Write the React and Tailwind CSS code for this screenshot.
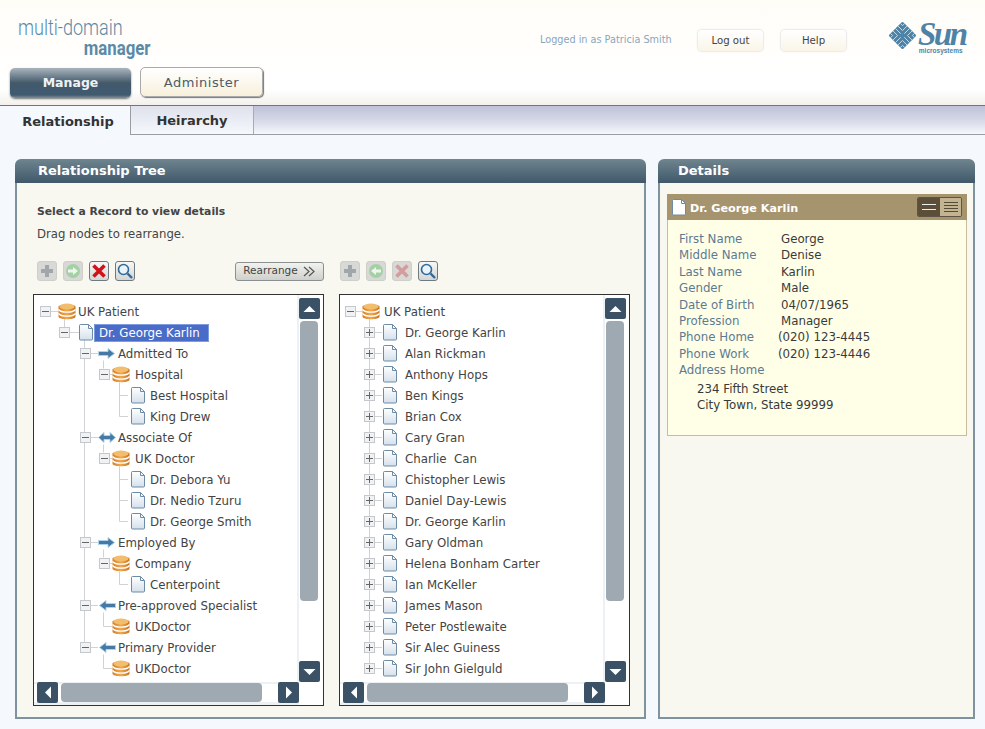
const leftRows = [
  { level: 0, type: "db", label: "UK Patient", open: true },
  { level: 1, type: "doc", label: "Dr. George Karlin", open: true, selected: true },
  { level: 2, type: "right", label: "Admitted To", open: true },
  { level: 3, type: "db", label: "Hospital", open: true },
  { level: 4, type: "doc", label: "Best Hospital" },
  { level: 4, type: "doc", label: "King Drew" },
  { level: 2, type: "both", label: "Associate Of", open: true },
  { level: 3, type: "db", label: "UK Doctor", open: true },
  { level: 4, type: "doc", label: "Dr. Debora Yu" },
  { level: 4, type: "doc", label: "Dr. Nedio Tzuru" },
  { level: 4, type: "doc", label: "Dr. George Smith" },
  { level: 2, type: "right", label: "Employed By", open: true },
  { level: 3, type: "db", label: "Company", open: true },
  { level: 4, type: "doc", label: "Centerpoint" },
  { level: 2, type: "left", label: "Pre-approved Specialist", open: true },
  { level: 3, type: "db", label: "UKDoctor", leaf: true },
  { level: 2, type: "left", label: "Primary Provider", open: true },
  { level: 3, type: "db", label: "UKDoctor", leaf: true },
];

const rightNames = [
  "Dr. George Karlin", "Alan Rickman", "Anthony Hops", "Ben Kings", "Brian Cox", "Cary Gran",
  "Charlie  Can", "Chistopher Lewis", "Daniel Day-Lewis", "Dr. George Karlin", "Gary Oldman",
  "Helena Bonham Carter", "Ian McKeller", "James Mason", "Peter Postlewaite", "Sir Alec Guiness", "Sir John Gielguld",
];

const rightRows = [
  { level: 0, type: "db", label: "UK Patient", open: true, iconAt: 22, expAt: 5 },
  ...rightNames.map((label) => ({ level: 1, type: "doc", label, closed: true, iconAt: 43, expAt: 24, wide: true })),
];

const details = [
  ["First Name", "George"],
  ["Middle Name", "Denise"],
  ["Last Name", "Karlin"],
  ["Gender", "Male"],
  ["Date of Birth", "04/07/1965"],
  ["Profession", "Manager"],
  ["Phone Home", "(020) 123-4445", true],
  ["Phone Work", "(020) 123-4446", true],
];

// x positions inside the tree box, per level
const expanderX = [6, 25, 46, 65, 0];
const iconX = [24, 45, 64, 78, 97];
const rowY = (i) => 16.5 + 21 * i;

function DbIcon() {
  return (
    <svg width="18" height="17" viewBox="0 0 18 17" className="shrink-0">
      <defs>
        <linearGradient id="dbg" x1="0" x2="1" y1="0" y2="0">
          <stop offset="0" stopColor="#d67f24" />
          <stop offset="0.5" stopColor="#f2a94e" />
          <stop offset="1" stopColor="#c9731c" />
        </linearGradient>
      </defs>
      <path d="M.5 3.5C.5 .8 17.5 .8 17.5 3.5V13.5C17.5 17.2 .5 17.2 .5 13.5Z" fill="url(#dbg)" />
      <ellipse cx="9" cy="3.5" rx="7.5" ry="3" fill="#f3bd6e" />
      <path d="M.5 6.5C3 10 15 10 17.5 6.5" stroke="#fff" strokeWidth="1.3" fill="none" />
      <path d="M.5 10.5C3 14 15 14 17.5 10.5" stroke="#fff" strokeWidth="1.3" fill="none" />
    </svg>
  );
}

function DocIcon({ white }) {
  return (
    <svg width="15" height="17" viewBox="0 0 15 17" className="shrink-0">
      <defs>
        <linearGradient id="docg" x1="0" x2="0" y1="0" y2="1">
          <stop offset="0" stopColor="#ffffff" />
          <stop offset="1" stopColor="#d5e0ec" />
        </linearGradient>
      </defs>
      <path
        d="M.5 1.5a1 1 0 0 1 1-1H9.5L13.5 4.5V15a1 1 0 0 1-1 1H1.5a1 1 0 0 1-1-1Z"
        fill={white ? "#fff" : "url(#docg)"}
        stroke="#6d8ba5"
      />
      <path d="M9.5 .5V4.5H13.5" fill="none" stroke="#6d8ba5" />
    </svg>
  );
}

function ArrowIcon({ type }) {
  const d = {
    right: "M.5 6.5H10V3.5L16.5 8.5L10 13.5V10.5H.5Z",
    left: "M17.5 6.5H8V3.5L1.5 8.5L8 13.5V10.5H17.5Z",
    both: "M.5 8.5L6 3.5V6.5H12V3.5L17.5 8.5L12 13.5V10.5H6V13.5Z",
  }[type];
  return (
    <svg width="18" height="17" viewBox="0 0 18 17" className="shrink-0">
      <path d={d} fill="#4679a3" stroke="#a9d3ee" strokeWidth="1" />
    </svg>
  );
}

function Expander({ plus }) {
  return (
    <span className="flex h-[11px] w-[11px] items-center justify-center border border-[#c4c8cc] bg-[#f1f2f3]">
      <svg width="7" height="7" viewBox="0 0 7 7">
        <path d={plus ? "M0 3.5H7M3.5 0V7" : "M0 3.5H7"} stroke="#666" />
      </svg>
    </span>
  );
}

function TreeRow({ row }) {
  const left = row.iconAt ?? iconX[row.level];
  const isArrow = row.type === "right" || row.type === "left" || row.type === "both";
  let textGap = "ml-[2px]";
  if (row.level === 3) textGap = "ml-[5px]";
  if (row.level === 4) textGap = "ml-[4px]";
  if (row.wide) textGap = "ml-[7px]";
  if (row.iconAt === 22) textGap = "ml-[4px]";
  return (
    <div className="relative flex h-[21px] items-center" style={{ paddingLeft: left }}>
      {(row.open || row.closed) && (
        <span className="absolute top-[5px]" style={{ left: row.expAt ?? expanderX[row.level] }}>
          <Expander plus={row.closed} />
        </span>
      )}
      {row.type === "db" && <DbIcon />}
      {row.type === "doc" && <DocIcon />}
      {isArrow && <ArrowIcon type={row.type} />}
      {row.selected ? (
        <span className="flex h-[18px] w-[115px] items-center border border-[#7f9be0] bg-[#4a6cc9] pl-[4px] pt-[2px] text-white">
          {row.label}
        </span>
      ) : (
        <span className={`${textGap} whitespace-pre pt-[2px]`}>{row.label}</span>
      )}
    </div>
  );
}

function leftLines() {
  const out = ["M17 16.5H24", "M30.5 23V32", "M36 37.5H45", "M50.5 44V352.5"];
  [2, 6, 11, 14, 16].forEach((i) => out.push(`M57 ${rowY(i)}H64`));
  [2, 6, 11].forEach((i) => out.push(`M69.5 ${rowY(i) + 7}V${rowY(i) + 15}`));
  [14, 16].forEach((i) => out.push(`M69.5 ${rowY(i) + 7}V${rowY(i + 1)}H78`));
  [3, 7, 12].forEach((i) => out.push(`M76 ${rowY(i)}H78`));
  [[3, 2], [7, 3], [12, 1]].forEach(([i, n]) => {
    out.push(`M85.5 ${rowY(i) + 8}V${rowY(i + n)}`);
    for (let k = 1; k <= n; k++) out.push(`M85.5 ${rowY(i + k)}H94`);
  });
  return out;
}

function rightLines() {
  const out = ["M16 16.5H22", "M29.5 24V373.5"];
  for (let i = 1; i < 18; i++) out.push(`M35 ${rowY(i)}H42`);
  return out;
}

function TreeLines({ variant }) {
  const lines = variant === "left" ? leftLines() : rightLines();
  return (
    <svg className="pointer-events-none absolute left-0 top-0" width="150" height="386">
      <path d={lines.join(" ")} stroke="#d0d3d6" fill="none" />
    </svg>
  );
}

function ScrollBtn({ dir }) {
  const d = {
    up: "M2.5 12L8.5 6L14.5 12Z",
    down: "M2.5 6L8.5 12L14.5 6Z",
    left: "M12 2.5L6 8.5L12 14.5Z",
    right: "M6 2.5L12 8.5L6 14.5Z",
  }[dir];
  return (
    <span className="flex h-[21px] w-[21px] shrink-0 items-center justify-center rounded-[2px] bg-[#3b5266]">
      <svg width="17" height="17" viewBox="0 0 17 17">
        <path d={d} fill="#fff" />
      </svg>
    </span>
  );
}

function TreeBox({ rows, variant }) {
  return (
    <div className="flex h-[412px] w-[291px] flex-col border border-[#333] bg-white">
      <div className="flex h-[387px]">
        <div className="relative flex-1 pt-[6px]">
          <TreeLines variant={variant} />
          <div className="relative">
            {rows.map((row, i) => (
              <TreeRow key={i} row={row} />
            ))}
          </div>
        </div>
        <div className="flex w-[26px] flex-col bg-[linear-gradient(90deg,#eef1f4_2px,#fff_2px)] pl-[2px] pt-[3px]">
          <ScrollBtn dir="up" />
          <span className="ml-[1px] mt-[2px] h-[280px] w-[18px] rounded-[4px] bg-[#9ea9b1]" />
          <span className="flex-1" />
          <ScrollBtn dir="down" />
        </div>
      </div>
      <div className="flex h-[23px] items-start bg-[linear-gradient(#eef1f4_2px,#fff_2px,#fff_20px,#eef1f4_20px)] pl-[3px]">
        <ScrollBtn dir="left" />
        <span className="ml-[3px] mt-[1px] h-[19px] w-[202px] rounded-[4px] bg-[#9ea9b1]" />
        <span className="w-[16px]" />
        <ScrollBtn dir="right" />
        <span className="ml-auto h-[23px] w-[24px] bg-white" />
      </div>
    </div>
  );
}

function ToolBtn({ kind, disabled }) {
  return (
    <span
      className={`flex h-[20px] w-[20px] items-center justify-center rounded-[3px] border ${
        disabled ? "border-[#cfcfca] bg-[#d8d9d6]" : "border-[#6f7a80] bg-gradient-to-b from-[#f8f8f6] to-[#d4d6d4]"
      }`}
    >
      <svg width="18" height="18" viewBox="0 0 18 18" className={kind === "x" && disabled ? "opacity-30" : ""}>
        {kind === "plus" && <path d="M9 3V15M3 9H15" stroke="#a0a7aa" strokeWidth="4" />}
        {kind === "goRight" && (
          <>
            <circle cx="9" cy="9" r="7" fill="#a5d0a5" />
            <path d="M4 7.5H9V5L14 9L9 13V10.5H4Z" fill="#edf5ed" />
          </>
        )}
        {kind === "goLeft" && (
          <>
            <circle cx="9" cy="9" r="7" fill="#a5d0a5" />
            <path d="M14 7.5H9V5L4 9L9 13V10.5H14Z" fill="#edf5ed" />
          </>
        )}
        {kind === "x" && <path d="M3.5 3.5L14.5 14.5M14.5 3.5L3.5 14.5" stroke="#d0121b" strokeWidth="3.6" />}
        {kind === "search" && (
          <>
            <circle cx="7.5" cy="7.5" r="5" fill="#eaf3fa" stroke="#2f6a9a" strokeWidth="1.6" />
            <path d="M11.5 11.5L16 16" stroke="#2f6a9a" strokeWidth="2.4" />
          </>
        )}
      </svg>
    </span>
  );
}

function PanelHead({ title, indent }) {
  return (
    <div
      className={`flex h-[24px] items-center rounded-t-[6px] bg-gradient-to-b from-[#6f858f] to-[#40586a] pb-[1px] text-[13px] font-bold text-white ${indent}`}
    >
      {title}
    </div>
  );
}

function SunLogo() {
  return (
    <div className="flex items-start">
      <svg width="29" height="29" viewBox="0 0 29 29" className="shrink-0">
        <g transform="rotate(45 14.5 14.5)">
          <rect x="4.5" y="4.5" width="20" height="20" rx="1.5" fill="#4f83a6" />
          <path
            d="M14.5 4.5V12M11 4.5V11H4.5M7.5 4.5V7.5H4.5M24.5 14.5H17M24.5 11H18V4.5M24.5 7.5H21.5V4.5M14.5 24.5V17M18 24.5V18H24.5M21.5 24.5V21.5H24.5M4.5 14.5H12M4.5 18H11V24.5M4.5 21.5H7.5V24.5"
            fill="none"
            stroke="#dbe8f0"
            strokeWidth="0.8"
          />
        </g>
      </svg>
      <div className="ml-[1px] flex flex-col items-end">
        <span className="h-[24px] font-['Liberation_Serif',serif] text-[33px] font-bold italic leading-[26px] tracking-[-2.5px] text-[#4f83a6]">
          Sun
        </span>
        <span className="mr-[3px] mt-[2px] font-['Liberation_Sans',sans-serif] text-[6.5px] font-bold leading-[7px] text-[#4f83a6]">
          microsystems
        </span>
      </div>
    </div>
  );
}

export default function App() {
  return (
    <div className="h-[729px] w-[985px] overflow-hidden bg-[#f5f8fc] font-['DejaVu_Sans',sans-serif] text-[11.8px] text-[#444]">
      <header className="flex h-[105px] flex-col bg-gradient-to-b from-[#fffdf8] via-white via-85% to-[#f4f1ec]">
        <div className="flex h-[67px] items-start">
          <div className="ml-[18px] mt-[17px] flex w-[132px] flex-col font-['Roboto',sans-serif] text-[#5a8aa8]">
            <span className="origin-left scale-x-[0.82] whitespace-nowrap text-[22px] font-light leading-[22px]">multi-domain</span>
            <span className="origin-right scale-x-[0.8] self-end text-[21px] font-bold leading-[18px]">manager</span>
          </div>
          <div className="ml-[390px] mt-[30px] flex items-center">
            <span className="w-[158px] text-[9.7px] text-[#8aa5bd]">Logged in as Patricia Smith</span>
            <button className="h-[21px] w-[65px] rounded-[4px] bg-gradient-to-b from-white to-[#faf5e8] text-[10.2px] text-[#444] shadow-[0_0_2px_#bbb]">
              Log out
            </button>
            <button className="ml-[18px] h-[21px] w-[65px] rounded-[4px] bg-gradient-to-b from-white to-[#faf5e8] text-[10.2px] text-[#444] shadow-[0_0_2px_#bbb]">
              Help
            </button>
          </div>
          <div className="ml-[42px] mt-[21px]">
            <SunLogo />
          </div>
        </div>
        <div className="flex items-start pl-[10px]">
          <button className="mt-[1px] h-[30px] w-[121px] rounded-[5px] bg-[linear-gradient(#a9b5bd,#43596b_50%,#3f5a70_90%,#7f8f9b)] text-[12.5px] font-bold text-[#eef2f5] shadow-[0_1px_2px_#777]">
            Manage
          </button>
          <button className="ml-[9px] h-[30px] w-[123px] rounded-[5px] border border-[#aaa] bg-gradient-to-b from-white to-[#f8f0dc] pt-[1px] text-[13px] tracking-[0.5px] text-[#4f5b66] shadow-[1px_1px_1px_#777]">
            Administer
          </button>
        </div>
      </header>

      <nav className="flex h-[30px] border-y border-t-[#6d7680] border-b-[#9a9ea4] bg-gradient-to-b from-[#bfc2d9] via-[#d5d8e6] to-[#f5f8fc]">
        <div className="-mb-px flex w-[131px] items-center justify-center border-r border-[#9a9ea4] bg-[#f5f8fc] pl-[6px] pt-[2px] text-[13px] font-bold text-[#333]">
          Relationship
        </div>
        <div className="flex w-[123px] items-center justify-center border-r border-[#a8abb0] bg-gradient-to-b from-[#dfe1ec] to-[#f5f8fc] pt-[2px] text-[13px] font-bold text-[#333]">
          Heirarchy
        </div>
      </nav>

      <main className="flex gap-[12px] pl-[15px] pt-[24px]">
        <section className="h-[560px] w-[631px] rounded-t-[6px] bg-[#f8f8f0]">
          <PanelHead title="Relationship Tree" indent="pl-[23px]" />
          <div className="h-[536px] border-x-2 border-b-2 border-[#7f929f] pl-[20px] pt-[21px]">
            <p className="text-[10.8px] font-bold leading-[15px]">Select a Record to view details</p>
            <p className="mt-[8px] text-[11.7px] leading-[15px]">Drag nodes to rearrange.</p>
            <div className="mt-[19px] flex h-[20px] items-center">
              <div className="flex w-[198px] gap-[6px]">
                <ToolBtn kind="plus" disabled />
                <ToolBtn kind="goRight" disabled />
                <ToolBtn kind="x" />
                <ToolBtn kind="search" />
              </div>
              <button className="flex h-[19px] w-[89px] items-center justify-center gap-[5px] rounded-[3px] border border-[#8b9093] bg-gradient-to-b from-[#f2f2ee] to-[#cfd0cd] text-[10.5px] text-[#444]">
                Rearrange
                <svg width="13" height="11" viewBox="0 0 13 11">
                  <path d="M1 1L6 5.5L1 10M6 1L11 5.5L6 10" fill="none" stroke="#555" strokeWidth="1.2" />
                </svg>
              </button>
              <div className="ml-[16px] flex gap-[6px]">
                <ToolBtn kind="plus" disabled />
                <ToolBtn kind="goLeft" disabled />
                <ToolBtn kind="x" disabled />
                <ToolBtn kind="search" />
              </div>
            </div>
            <div className="-ml-[4px] mt-[13px] flex gap-[15px]">
              <TreeBox rows={leftRows} variant="left" />
              <TreeBox rows={rightRows} variant="right" />
            </div>
          </div>
        </section>

        <section className="h-[560px] w-[317px] rounded-t-[6px] bg-[#f8f8f0]">
          <PanelHead title="Details" indent="pl-[20px]" />
          <div className="h-[536px] border-x-2 border-b-2 border-[#7f929f] pl-[7px] pt-[11px]">
            <div className="h-[242px] w-[300px] border border-[#c7bd9a] bg-[#ffffe8]">
              <div className="-mx-px -mt-px flex h-[26px] items-center bg-[#a6946e] pl-[5px] pr-[5px] text-[11.2px] font-bold text-white">
                <DocIcon white />
                <span className="ml-[3px] pt-[4px]">Dr. George Karlin</span>
                <span className="ml-auto flex h-[20px] w-[45px] overflow-hidden rounded-[2px] border border-[#5f5545]">
                  <span className="flex w-[22px] items-center justify-center bg-[#5b4f3a]">
                    <svg width="14" height="8" viewBox="0 0 14 8">
                      <path d="M0 1.5H14M0 6.5H14" stroke="#eee" />
                    </svg>
                  </span>
                  <span className="flex flex-1 items-center justify-center bg-[#c2b391]">
                    <svg width="14" height="12" viewBox="0 0 14 12">
                      <path d="M0 1.5H14M0 4.5H14M0 7.5H14M0 10.5H14" stroke="#544a38" />
                    </svg>
                  </span>
                </span>
              </div>
              <div className="pl-[11px] pt-[11px] leading-[16.4px]">
                {details.map(([label, value, shift]) => (
                  <div key={label} className="flex h-[16.4px]">
                    <span className="w-[102px] text-[#5d7a90]">{label}</span>
                    <span className={`text-[#3a3a3a] ${shift ? "-ml-[3px]" : ""}`}>{value}</span>
                  </div>
                ))}
                <div className="text-[#5d7a90]">Address Home</div>
                <div className="ml-[18px] mt-[2px] text-[#3a3a3a]">
                  234 Fifth Street
                  <br />
                  City Town, State 99999
                </div>
              </div>
            </div>
          </div>
        </section>
      </main>
    </div>
  );
}
